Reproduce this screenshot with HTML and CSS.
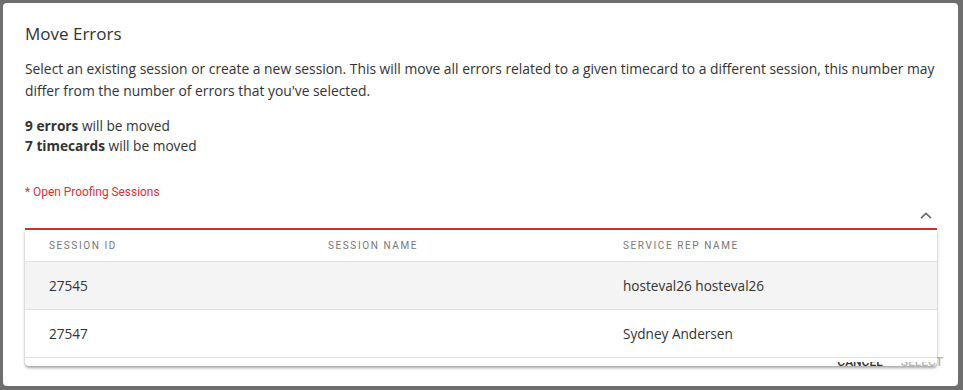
FILE: index.html
```html
<!DOCTYPE html>
<html lang="en">
<head>
<meta charset="utf-8">
<title>Move Errors</title>
<link rel="stylesheet" href="styles.css">
</head>
<body>
<div class="dialog">
  <h2 class="title">Move Errors</h2>
  <p class="desc">Select an existing session or create a new session. This will move all errors related to a given timecard to a different session, this number may differ from the number of errors that you've selected.</p>
  <div class="counts">
    <div><b>9 errors</b> will be moved</div>
    <div><b>7 timecards</b> will be moved</div>
  </div>
  <div class="field">
    <div class="label">* Open Proofing Sessions</div>
    <div class="control">
      <svg class="chev" width="12" height="7" viewBox="0 0 12 7"><path d="M1 6.2 L6 1.4 L11 6.2" fill="none" stroke="#6b6b6b" stroke-width="1.7"/></svg>
    </div>
    <div class="panel">
      <div class="row head">
        <div class="cell">SESSION ID</div>
        <div class="cell">SESSION NAME</div>
        <div class="cell">SERVICE REP NAME</div>
      </div>
      <div class="row alt">
        <div class="cell">27545</div>
        <div class="cell"></div>
        <div class="cell">hosteval26 hosteval26</div>
      </div>
      <div class="row">
        <div class="cell">27547</div>
        <div class="cell"></div>
        <div class="cell">Sydney Andersen</div>
      </div>
      <div class="spacer"></div>
    </div>
  </div>
  <div class="actions">
    <button class="btn">CANCEL</button>
    <button class="btn disabled">SELECT</button>
  </div>
</div>
</body>
</html>
```
FILE: styles.css
```css
html, body {
  margin: 0;
  padding: 0;
  height: 100%;
}
body {
  background: #6e6e6e;
  font-family: "Open Sans", "Noto Sans", sans-serif;
  color: #333;
  overflow: hidden;
}
.dialog {
  position: relative;
  box-sizing: border-box;
  margin: 3px 0 0 3px;
  width: 955px;
  height: 383px;
  background: #fff;
  border-radius: 4px;
  padding: 19px 21px 0 22px;
}
.title {
  margin: 0;
  font-size: 17px;
  font-weight: 400;
  line-height: 24px;
  color: #333;
}
.desc {
  margin: 12px 0 0;
  font-size: 13.85px;
  line-height: 22px;
}
.counts {
  margin-top: 14px;
  font-size: 13.7px;
  line-height: 20px;
}
.counts b {
  font-weight: 700;
}
.field {
  position: relative;
  margin-top: 29px;
}
.label {
  font-family: Roboto, "Liberation Sans", sans-serif;
  font-size: 11.9px;
  line-height: 14px;
  color: #d7323a;
}
.control {
  height: 29px;
  border-bottom: 2px solid #d32f2f;
  display: flex;
  justify-content: flex-end;
  align-items: flex-start;
  padding-right: 5px;
}
.chev {
  display: block;
  margin-top: 13px;
}
.panel {
  position: absolute;
  left: 0;
  right: 0;
  top: 45px;
  height: 136px;
  overflow: hidden;
  background: transparent;
  border-radius: 0 0 4px 4px;
  box-shadow: 0 2px 3px rgba(0,0,0,0.35), 0 0 1px rgba(0,0,0,0.15);
  z-index: 2;
}
.row {
  display: grid;
  grid-template-columns: 279px 295px 1fr;
  height: 47px;
  background: #fff;
  border-bottom: 1px solid #e0e0e0;
  align-items: center;
  font-size: 13.6px;
  color: #333;
}
.row.alt {
  background: #f4f4f4;
}
.row.head {
  height: 31px;
  font-family: Roboto, "Liberation Sans", sans-serif;
  font-size: 10px;
  letter-spacing: 1.6px;
  color: #777;
}
.spacer {
  height: 4px;
  background: #fff;
}
.cell {
  padding-left: 24px;
}
.actions {
  position: absolute;
  right: 15px;
  bottom: 16px;
  display: flex;
  gap: 18px;
}
.btn {
  border: 0;
  background: none;
  padding: 0;
  font-family: Roboto, "Liberation Sans", sans-serif;
  font-weight: 500;
  font-size: 12px;
  letter-spacing: 0;
  color: #333;
  line-height: 16px;
}
.btn.disabled {
  color: #b5b5b5;
}
```
